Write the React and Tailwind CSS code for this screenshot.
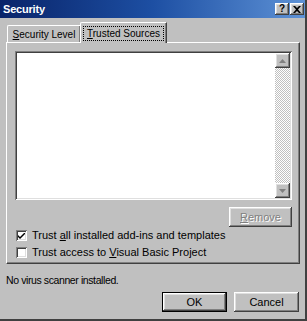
import React from "react";

const raised =
  "shadow-[inset_-1px_-1px_#404040,inset_1px_1px_#ffffff,inset_-2px_-2px_#808080,inset_2px_2px_#dfdfdf]";
const sunken =
  "shadow-[inset_1px_1px_#808080,inset_-1px_-1px_#ffffff,inset_2px_2px_#404040,inset_-2px_-2px_#dfdfdf]";

function TitleBtn({ children }) {
  return (
    <div
      className={`w-[14px] h-[12px] bg-[#c0c0c0] ${raised} flex items-center justify-center text-[10px] font-bold leading-none text-black`}
    >
      {children}
    </div>
  );
}

function Check({ checked }) {
  return (
    <div className={`w-[11px] h-[11px] bg-white ${sunken} flex items-center justify-center shrink-0`}>
      {checked && (
        <svg width="7" height="6" viewBox="0 0 7 6">
          <path d="M0 2v2l2 2 5-5V-1L2 4z" fill="black" />
        </svg>
      )}
    </div>
  );
}

function ArrowBtn({ up }) {
  return (
    <div className={`w-[15px] h-[15px] bg-[#c0c0c0] ${raised} flex items-center justify-center`}>
      <svg width="7" height="4" viewBox="0 0 7 4">
        {up ? <path d="M3.5 0L7 4H0z" fill="#808080" /> : <path d="M0 0h7L3.5 4z" fill="#808080" />}
      </svg>
    </div>
  );
}

export default function App() {
  return (
    <div
      className="w-[307px] h-[321px] bg-[#c0c0c0] flex flex-col border-r-2 border-b-2 border-r-[#404040] border-b-[#404040] text-[11px] text-black overflow-hidden"
      style={{ fontFamily: '"Liberation Sans", Arial, sans-serif' }}
    >
      {/* Title bar */}
      <div className="h-[18px] shrink-0 flex items-center justify-between pl-[3px] pr-[1px] bg-gradient-to-r from-[#0a246a] via-[#1d4fa3] to-[#5e92d6]">
        <span className="text-white font-bold text-[11px] tracking-[-0.2px]">Security</span>
        <div className="flex gap-[1px]">
          <TitleBtn>?</TitleBtn>
          <TitleBtn>
            <svg width="8" height="7" viewBox="0 0 8 7">
              <path d="M0 0h2l2 2 2-2h2L5 3.5 8 7H6L4 5 2 7H0l3-3.5z" fill="black" />
            </svg>
          </TitleBtn>
        </div>
      </div>

      {/* Tabs */}
      <div className="mt-[4px] ml-[6px] mr-[5px] flex items-end h-[20px] shrink-0 relative z-10 text-[10px]">
        <div className="h-[17px] ml-[1px] w-[73px] flex items-center justify-center border-l border-t border-white shadow-[inset_-1px_0_#808080] rounded-tl-[2px] bg-[#c0c0c0]">
          <span className="pt-[1px]">
            <u>S</u>ecurity Level
          </span>
        </div>
        <div className="h-[21px] -mb-[1px] w-[87px] flex items-start justify-center pt-[4px] border-l border-t border-white border-r border-r-[#404040] shadow-[inset_-1px_0_#808080] rounded-tl-[2px] bg-[#c0c0c0]">
          <span className="px-[3px] outline-dotted outline-1 outline-black leading-[13px]">
            <u>T</u>rusted Sources
          </span>
        </div>
      </div>

      {/* Panel */}
      <div className="ml-[6px] mr-[5px] h-[222px] shrink-0 border-l border-t border-white border-r border-b border-r-[#404040] border-b-[#404040] shadow-[inset_-1px_-1px_#808080] pl-[8px] pr-[7px] pt-[8px] flex flex-col">
        <div className={`w-[277px] h-[149px] shrink-0 bg-white ${sunken} p-[2px] flex justify-end`}>
          <div className="w-[15px] h-full flex flex-col">
            <ArrowBtn up />
            <div className="flex-1 bg-[repeating-conic-gradient(#c0c0c0_0_25%,#ffffff_0_50%)] bg-[length:2px_2px]" />
            <ArrowBtn />
          </div>
        </div>
        <div className="flex justify-end w-[277px] mt-[7px]">
          <div className={`w-[63px] h-[20px] ${raised} flex items-center justify-center`}>
            <span className="text-[#808080] [text-shadow:1px_1px_#ffffff]">
              <u>R</u>emove
            </span>
          </div>
        </div>
        <div className="flex items-center gap-[5px] mt-[3px] h-[11px] ml-[1px]">
          <Check checked />
          <span className="leading-[11px]">
            Trust <u>a</u>ll installed add-ins and templates
          </span>
        </div>
        <div className="flex items-center gap-[5px] mt-[6px] h-[11px] ml-[1px]">
          <Check />
          <span className="leading-[11px]">
            Trust access to <u>V</u>isual Basic Project
          </span>
        </div>
      </div>

      <div className="ml-[6px] mt-[10px] leading-[13px] text-[10.5px] tracking-[-0.4px] shrink-0">
        No virus scanner installed.
      </div>

      <div className="flex justify-end gap-[7px] mt-[5px] mr-[6px] shrink-0">
        <div className="w-[65px] h-[20px] border border-black">
          <div className={`w-full h-full ${raised} flex items-center justify-center`}>OK</div>
        </div>
        <div className={`w-[65px] h-[20px] ${raised} flex items-center justify-center`}>Cancel</div>
      </div>
    </div>
  );
}
